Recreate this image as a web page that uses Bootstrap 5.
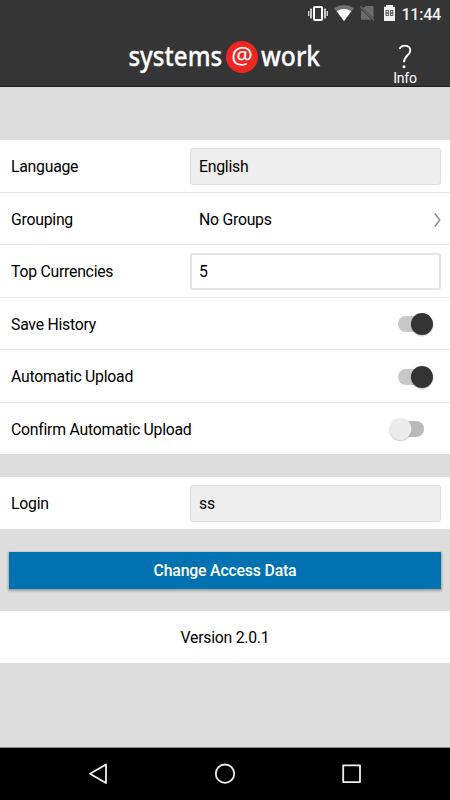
<!DOCTYPE html>
<html lang="en">
<head>
<meta charset="utf-8">
<meta name="viewport" content="width=device-width, initial-scale=1">
<title>Settings</title>
<link href="https://cdn.jsdelivr.net/npm/bootstrap@5.3.0/dist/css/bootstrap.min.css" rel="stylesheet">
<style>
body{font-family:Roboto,sans-serif;font-size:15.8px;line-height:20px;letter-spacing:-.25px;color:#000;background:#ddd}
.screen{width:450px;height:800px;overflow:hidden}
.app-head{height:87px;background:#353535;border-bottom:1px solid #1c1a1b}
.status-line{height:28px;padding:1px 9px 0 0}
.status-icons{margin:-1px -3px 0 0}
.clock{font-size:16px;font-weight:500;color:#f2f2f2;letter-spacing:-.2px}
.title-line{height:58px}
.brand-mark{margin-left:120px}
.info-link{width:40px;margin-right:25px;font-size:14px;line-height:15px;letter-spacing:-.2px;color:#fff}
.settings{margin-top:53.4px}
.setting{height:52.5px;padding:2px 9px 0 11px;background:#fff;border-bottom:1px solid #e6e6e6}
.setting:last-child{border-bottom-color:#ddd}
.setting-name{width:179px}
.field{height:37px;padding:0 7px;border:2px solid #e4e4e4;border-radius:3px;background:#fff;margin-top:-1px}
.field-off{background:#eee;border-color:#dedede;border-width:1px;padding:1px 8px 0}
.plain{padding-left:9px}
.switch{width:52px;height:34px;margin-top:-1px}
.login-list{margin-top:22px}
.access-btn{height:37px;margin:22px 9px;padding:0;border:0;border-radius:0;background:#0071b1;color:#fff;font-size:15.8px;font-weight:500;box-shadow:0 1px 2px 1px rgba(0,0,0,.27);line-height:38px;letter-spacing:-.17px}
.access-btn:hover{background:#0071b1;color:#fff}
.version{height:52.1px;background:#fff;padding-top:2px}
.sys-nav{height:53px;background:#000;border-top:1px solid #888}
</style>
</head>
<body>
<main class="screen d-flex flex-column">
  <header class="app-head flex-shrink-0">
    <div class="status-line d-flex align-items-center justify-content-end">
      <svg class="status-icons" width="94" height="28" viewBox="306 0 94 28" fill="none">
        <rect x="314" y="7" width="8" height="13" stroke="#fff" stroke-width="2" rx=".7"/>
        <path d="M311 8.5v10M325 8.5v10" stroke="#eee" stroke-width="1.6"/><path d="M308.7 11v5M327.3 11v5" stroke="#ddd" stroke-width="1.3"/>
        <path d="M334 8.2Q344 2 354 8.2L344 21Z" fill="#727272"/><path d="M336.8 11.3Q344 6 351.2 11.3L344 21Z" fill="#fff"/>
        <path d="M366 6h7.5v12.2L363 7.7ZM361 9.2 371.5 19.8H361Z" fill="#6b6b6b"/><path d="M360.5 6.5 374 20.3" stroke="#6b6b6b" stroke-width="1.3"/>
        <path d="M386 5h7v1.7h2V21h-11V6.7h2Z" fill="#f1f1f1"/>
        <g stroke="#555" stroke-width=".9"><rect x="386" y="10.5" width="2.4" height="2.5"/><rect x="386" y="13" width="2.4" height="2.5"/><rect x="390.4" y="10.5" width="2.4" height="2.5"/><rect x="390.4" y="13" width="2.4" height="2.5"/></g>
      </svg>
      <span class="clock ps-1 text-nowrap">11:44</span>
    </div>
    <div class="title-line d-flex align-items-start justify-content-between">
      <svg class="brand-mark" width="210" height="58" viewBox="120 28 210 58" font-family="'Noto Sans','Open Sans',sans-serif" fill="#fff" letter-spacing="0">
        <g stroke="#fff" stroke-width=".3">
        <text x="0" y="0" transform="translate(128.4 65.5) scale(.83 1)" font-size="27.5" font-weight="500" textLength="113" lengthAdjust="spacingAndGlyphs">systems</text>
        <text x="0" y="0" transform="translate(261 65.5) scale(.85 1)" font-size="27.5" font-weight="500" textLength="69.5" lengthAdjust="spacingAndGlyphs">work</text>
        </g>
        <circle cx="242" cy="57" r="16" fill="#ee2722"/>
        <text x="231.3" y="64" font-size="23.5" font-weight="400" textLength="21.6" lengthAdjust="spacingAndGlyphs">@</text>
      </svg>
      <a class="info-link d-flex flex-column align-items-center text-decoration-none" href="#">
        <svg width="40" height="43" viewBox="385 28 40 43" fill="none"><path d="M399.7 49.2C400.2 44.5 410.3 44.2 410.3 50.7C410.3 55.3 404 55.5 404 62.2" stroke="#fff" stroke-width="1.9"/><circle cx="404" cy="66.8" r="1.5" fill="#fff"/></svg>
        <span>Info</span>
      </a>
    </div>
  </header>

  <section class="settings flex-shrink-0">
    <div class="setting d-flex align-items-center"><span class="setting-name">Language</span><div class="field field-off flex-grow-1 d-flex align-items-center">English</div></div>
    <div class="setting d-flex align-items-center"><span class="setting-name">Grouping</span><span class="plain flex-grow-1">No Groups</span><svg width="9" height="16" viewBox="0 0 9 16" fill="none"><path d="M2.8 1.5 7.8 8l-5 6.5" stroke="#8c8c8c" stroke-width="1.5"/></svg></div>
    <div class="setting d-flex align-items-center"><span class="setting-name">Top Currencies</span><div class="field flex-grow-1 d-flex align-items-center">5</div></div>
    <div class="setting d-flex align-items-center justify-content-between"><span>Save History</span>
      <svg class="switch" viewBox="0 0 52 34"><rect x="9" y="9" width="30" height="16" rx="8" fill="#c8c8c8"/><circle cx="33" cy="18" r="11.4" fill="#000" opacity=".16"/><circle cx="33" cy="17" r="11" fill="#333"/></svg></div>
    <div class="setting d-flex align-items-center justify-content-between"><span>Automatic Upload</span>
      <svg class="switch" viewBox="0 0 52 34"><rect x="9" y="9" width="30" height="16" rx="8" fill="#c8c8c8"/><circle cx="33" cy="18" r="11.4" fill="#000" opacity=".16"/><circle cx="33" cy="17" r="11" fill="#333"/></svg></div>
    <div class="setting d-flex align-items-center justify-content-between"><span>Confirm Automatic Upload</span>
      <svg class="switch" viewBox="0 0 52 34"><rect x="9" y="9" width="26" height="16" rx="8" fill="#b9b9b9"/><circle cx="11.5" cy="18" r="11.3" fill="#000" opacity=".16"/><circle cx="11.5" cy="17" r="11" fill="#ebebeb"/></svg></div>
  </section>

  <section class="login-list flex-shrink-0">
    <div class="setting d-flex align-items-center"><span class="setting-name">Login</span><div class="field field-off flex-grow-1 d-flex align-items-center">ss</div></div>
  </section>

  <button type="button" class="btn access-btn flex-shrink-0">Change Access Data</button>
  <div class="version flex-shrink-0 d-flex align-items-center justify-content-center">Version 2.0.1</div>

  <nav class="sys-nav mt-auto flex-shrink-0">
    <svg class="d-block" width="450" height="52" viewBox="0 748 450 52" fill="none" stroke="#eee" stroke-width="1.8" stroke-linejoin="round"><path d="M106 764.5v18.5L90 773.8Z"/><circle cx="225" cy="773.7" r="9.2"/><rect x="343.2" y="765.3" width="16.8" height="16.8"/></svg>
  </nav>
</main>
<script src="https://cdn.jsdelivr.net/npm/bootstrap@5.3.0/dist/js/bootstrap.bundle.min.js"></script>
</body>
</html>
